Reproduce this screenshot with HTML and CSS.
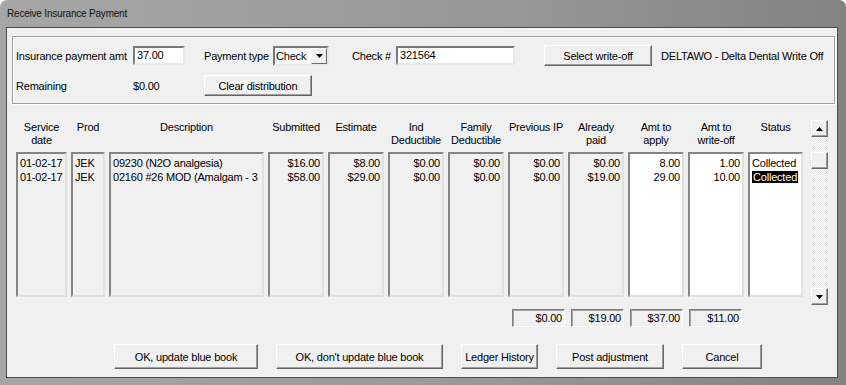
FILE: index.html
```html
<!DOCTYPE html>
<html lang="en">
<head>
    <meta charset="UTF-8">
    <title>Receive Insurance Payment</title>
    <link rel="stylesheet" href="styles.css">
</head>
<body>
<div class="window">
    <div class="titlebar">Receive Insurance Payment</div>
    <div class="client">

        <!-- payment header -->
        <div class="group">
            <div class="row">
                <span class="lbl first">Insurance payment amt</span>
                <div class="field amt">37.00</div>
                <span class="lbl pay-type">Payment type</span>
                <div class="combo">
                    <span class="combo-text">Check</span>
                    <span class="drop"><svg width="7" height="4" viewBox="0 0 7 4"><polygon points="0,0 7,0 3.5,4" fill="#000"/></svg></span>
                </div>
                <span class="lbl check-no">Check #</span>
                <div class="field check">321564</div>
                <button class="btn writeoff">Select write-off</button>
                <span class="lbl writeoff-name">DELTAWO - Delta Dental Write Off</span>
            </div>
            <div class="row">
                <span class="lbl first">Remaining</span>
                <span class="lbl remain">$0.00</span>
                <button class="btn clear">Clear distribution</button>
            </div>
        </div>

        <!-- distribution columns -->
        <div class="dist">
            <div class="cols">
                <div class="head">Service<br>date</div>
                <div class="head">Prod</div>
                <div class="head">Description</div>
                <div class="head">Submitted</div>
                <div class="head">Estimate</div>
                <div class="head">Ind<br>Deductible</div>
                <div class="head">Family<br>Deductible</div>
                <div class="head">Previous IP</div>
                <div class="head">Already<br>paid</div>
                <div class="head">Amt to<br>apply</div>
                <div class="head">Amt to<br>write-off</div>
                <div class="head">Status</div>

                <div class="list"><div>01-02-17</div><div>01-02-17</div></div>
                <div class="list"><div>JEK</div><div>JEK</div></div>
                <div class="list"><div>09230 (N2O analgesia)</div><div>02160 #26 MOD (Amalgam - 3</div></div>
                <div class="list num"><div>$16.00</div><div>$58.00</div></div>
                <div class="list num"><div>$8.00</div><div>$29.00</div></div>
                <div class="list num"><div>$0.00</div><div>$0.00</div></div>
                <div class="list num"><div>$0.00</div><div>$0.00</div></div>
                <div class="list num"><div>$0.00</div><div>$0.00</div></div>
                <div class="list num"><div>$0.00</div><div>$19.00</div></div>
                <div class="list num edit"><div>8.00</div><div>29.00</div></div>
                <div class="list num edit"><div>1.00</div><div>10.00</div></div>
                <div class="list edit status"><div>Collected</div><div><span class="selected">Collected</span></div></div>
            </div>

            <div class="vscroll">
                <span class="sb-btn"><svg width="7" height="4" viewBox="0 0 7 4"><polygon points="3.5,0 7,4 0,4" fill="#000"/></svg></span>
                <div class="sb-track">
                    <span class="sb-thumb"></span>
                </div>
                <span class="sb-btn"><svg width="7" height="4" viewBox="0 0 7 4"><polygon points="0,0 7,0 3.5,4" fill="#000"/></svg></span>
            </div>
        </div>

        <!-- totals -->
        <div class="totals">
            <div class="total">$0.00</div>
            <div class="total">$19.00</div>
            <div class="total">$37.00</div>
            <div class="total">$11.00</div>
        </div>

        <div class="actions">
            <button class="btn act w1">OK, update blue book</button>
            <button class="btn act w2">OK, don't update blue book</button>
            <button class="btn act w3">Ledger History</button>
            <button class="btn act w4">Post adjustment</button>
            <button class="btn act w5">Cancel</button>
        </div>
    </div>
</div>
</body>
</html>
```

FILE: styles.css
```css
body {
    margin: 0;
    background: #fff;
    font-family: "Liberation Sans", Arial, sans-serif;
    font-size: 11px;
    letter-spacing: -0.2px;
    color: #000;
}

.window {
    width: 846px;
    height: 385px;
    box-sizing: border-box;
    background: linear-gradient(to right, #a6a6a6, #979797 60%, #828282);
    border-radius: 7px 7px 0 0;
    overflow: hidden;
}

.titlebar {
    height: 27px;
    line-height: 28px;
    padding-left: 7px;
    font-size: 10px;
    color: #111;
}

.client {
    margin-left: 6px;
    width: 832px;
    height: 351px;
    box-sizing: border-box;
    border: 1px solid #4e4e4e;
    background: #f0f0f0;
}

/* header group box */
.group {
    margin: 8px 0 0 5px;
    width: 823px;
    height: 68px;
    box-sizing: border-box;
    border: 1px solid #a0a0a0;
    box-shadow: inset 1px 1px #fff, 1px 1px #fff;
    padding: 8px 0 0 3px;
}

.row {
    display: flex;
    align-items: center;
    height: 21px;
}

.row + .row {
    margin-top: 9px;
}

.lbl {
    white-space: nowrap;
}

.first { width: 117px; }
.remain { width: 71px; }
.pay-type { margin-left: 19px; width: 69px; }
.check-no { margin-left: 23px; width: 44px; }
.writeoff-name { margin-left: 9px; }

.field {
    height: 19px;
    box-sizing: border-box;
    background: #fff;
    border: 2px solid;
    border-color: #7a7a7a #e8e8e8 #e8e8e8 #7a7a7a;
    padding-left: 2px;
    line-height: 15px;
}

.amt { width: 52px; }
.check { width: 119px; }

.combo {
    width: 56px;
    height: 20px;
    box-sizing: border-box;
    display: flex;
    align-items: center;
    background: #fff;
    border: 2px solid;
    border-color: #7a7a7a #e8e8e8 #e8e8e8 #7a7a7a;
    padding-left: 1px;
}

.combo-text {
    flex: 1;
}

.drop {
    width: 16px;
    height: 16px;
    box-sizing: border-box;
    display: flex;
    align-items: center;
    justify-content: center;
    background: #f0f0f0;
    border: 1px solid;
    border-color: #fff #696969 #696969 #fff;
}

.btn {
    font: inherit;
    letter-spacing: inherit;
    color: #000;
    background: #f0f0f0;
    border: 1px solid;
    border-color: #fff #646464 #646464 #fff;
    box-shadow: inset -1px -1px #a0a0a0;
    padding: 0;
    height: 21px;
    white-space: nowrap;
}

.writeoff { margin-left: 29px; width: 108px; }
.clear { width: 108px; }

/* distribution lists */
.dist {
    display: flex;
    margin: 16px 0 0 9px;
}

.cols {
    display: grid;
    grid-template-columns: 51px 34px 155px repeat(8, 56px) 55px;
    grid-template-rows: 32px 145px;
    column-gap: 4px;
}

.head {
    text-align: center;
    line-height: 13px;
    padding-top: 1px;
    white-space: nowrap;
}

.list {
    box-sizing: border-box;
    border: 2px solid;
    border-color: #858585 #e0e0e0 #e0e0e0 #858585;
    background: #f0f0f0;
    padding: 2px 2px 0 2px;
    line-height: 14px;
    white-space: nowrap;
    overflow: hidden;
}

.num {
    text-align: right;
}

.edit {
    background: #fff;
}

.status {
    padding-left: 2px;
}

.selected {
    background: #000;
    color: #fff;
    padding: 0 1px;
}

.vscroll {
    margin-left: 8px;
    width: 17px;
    height: 185px;
    display: flex;
    flex-direction: column;
}

.sb-btn, .sb-thumb {
    height: 17px;
    box-sizing: border-box;
    display: flex;
    align-items: center;
    justify-content: center;
    background: #f0f0f0;
    border: 1px solid;
    border-color: #fff #696969 #696969 #fff;
    box-shadow: inset -1px -1px #a0a0a0;
}

.sb-track {
    flex: 1;
    padding-top: 15px;
    background: repeating-conic-gradient(#fff 0 25%, #e4e4e4 0 50%) 0 0 / 2px 2px;
}

/* totals */
.totals {
    display: flex;
    gap: 6px;
    margin: 4px 0 0 505px;
}

.total {
    width: 53px;
    height: 18px;
    box-sizing: border-box;
    border: 1px solid;
    border-color: #808080 #fff #fff #808080;
    box-shadow: inset 1px 1px #a0a0a0;
    text-align: right;
    padding-right: 2px;
    line-height: 16px;
}

.actions {
    display: flex;
    gap: 18px;
    margin: 17px 0 0 107px;
}

.act { height: 25px; }
.w1 { width: 144px; }
.w2 { width: 167px; }
.w3 { width: 77px; }
.w4 { width: 108px; }
.w5 { width: 80px; }
```
